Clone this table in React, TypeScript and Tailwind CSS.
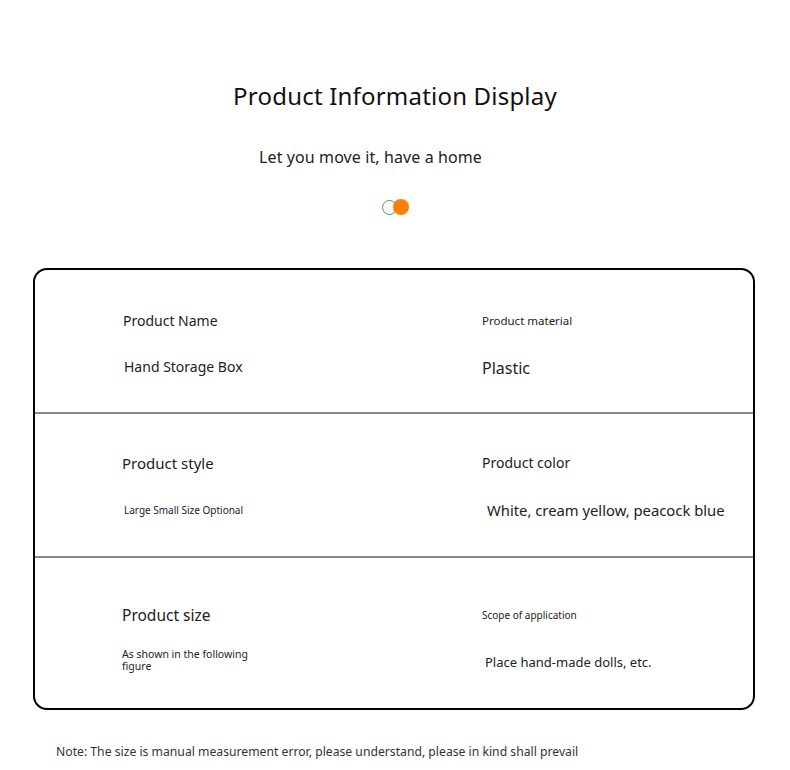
import React from 'react';

type Cell = {
  label: string;
  labelClass: string;
  value: string;
  valueClass: string;
  gapClass: string;
};

const rows: { left: Cell; right: Cell; rowClass: string }[] = [
  {
    rowClass: 'h-[142px] pt-[41px]',
    left: {
      label: 'Product Name',
      labelClass: 'text-[14px] pl-[88px]',
      value: 'Hand Storage Box',
      valueClass: 'text-[14px] pl-[89px]',
      gapClass: 'mt-[25px]',
    },
    right: {
      label: 'Product material',
      labelClass: 'text-[11.5px]',
      value: 'Plastic',
      valueClass: 'text-[16px]',
      gapClass: 'mt-[25px]',
    },
  },
  {
    rowClass: 'h-[144px] pt-[39px] border-t-2 border-[#888]',
    left: {
      label: 'Product style',
      labelClass: 'text-[15px] pl-[87px]',
      value: 'Large Small Size Optional',
      valueClass: 'text-[10px] pl-[89px]',
      gapClass: 'mt-[30px]',
    },
    right: {
      label: 'Product color',
      labelClass: 'text-[14px]',
      value: 'White, cream yellow, peacock blue',
      valueClass: 'text-[14.8px] pl-[5px]',
      gapClass: 'mt-[26px]',
    },
  },
  {
    rowClass: 'h-[152px] pt-[47px] border-t-2 border-[#888]',
    left: {
      label: 'Product size',
      labelClass: 'text-[15.5px] pl-[87px]',
      value: 'As shown in the following figure',
      valueClass: 'text-[10.5px] pl-[87px] w-[215px] leading-[12px]',
      gapClass: 'mt-[23px]',
    },
    right: {
      label: 'Scope of application',
      labelClass: 'text-[10px]',
      value: 'Place hand-made dolls, etc.',
      valueClass: 'text-[13px] pl-[3px]',
      gapClass: 'mt-[28px]',
    },
  },
];

const InfoCell: React.FC<{ cell: Cell }> = ({ cell }) => (
  <div className="flex flex-col">
    <div className={`${cell.labelClass} text-[#222] leading-[20px]`}>{cell.label}</div>
    <div className={`${cell.gapClass} ${cell.valueClass} text-[#222]`}>{cell.value}</div>
  </div>
);

export default function App() {
  return (
    <div
      className="w-[790px] h-[770px] bg-white text-[#111] overflow-hidden"
      style={{ fontFamily: '"Noto Sans", "Open Sans", sans-serif' }}
    >
      {/* Header */}
      <div className="pt-[78px] flex flex-col items-center">
        <h1 className="text-[24px] leading-[36px] tracking-[0.2px] font-normal text-[#111]">
          Product Information Display
        </h1>
        <p className="mt-[31px] mr-[49px] text-[16px] leading-[24px] tracking-[0.1px] text-[#222]">
          Let you move it, have a home
        </p>
        <div className="mt-[30px] flex items-center">
          <div className="w-[15px] h-[15px] rounded-full border border-[#3aa655] bg-white" />
          <div className="w-[16px] h-[16px] rounded-full bg-[#ff7f00] ml-[-4px]" />
        </div>
      </div>

      {/* Info table */}
      <div className="mt-[53px] mx-[33px] w-[722px] border-2 border-black rounded-[14px] overflow-hidden">
        {rows.map((row, i) => (
          <div key={i} className={`${row.rowClass} grid grid-cols-[447px_1fr]`}>
            <InfoCell cell={row.left} />
            <InfoCell cell={row.right} />
          </div>
        ))}
      </div>

      {/* Note */}
      <p className="mt-[33px] ml-[56px] text-[12.2px] leading-[18px] text-[#333]">
        Note: The size is manual measurement error, please understand, please in kind shall prevail
      </p>
    </div>
  );
}
